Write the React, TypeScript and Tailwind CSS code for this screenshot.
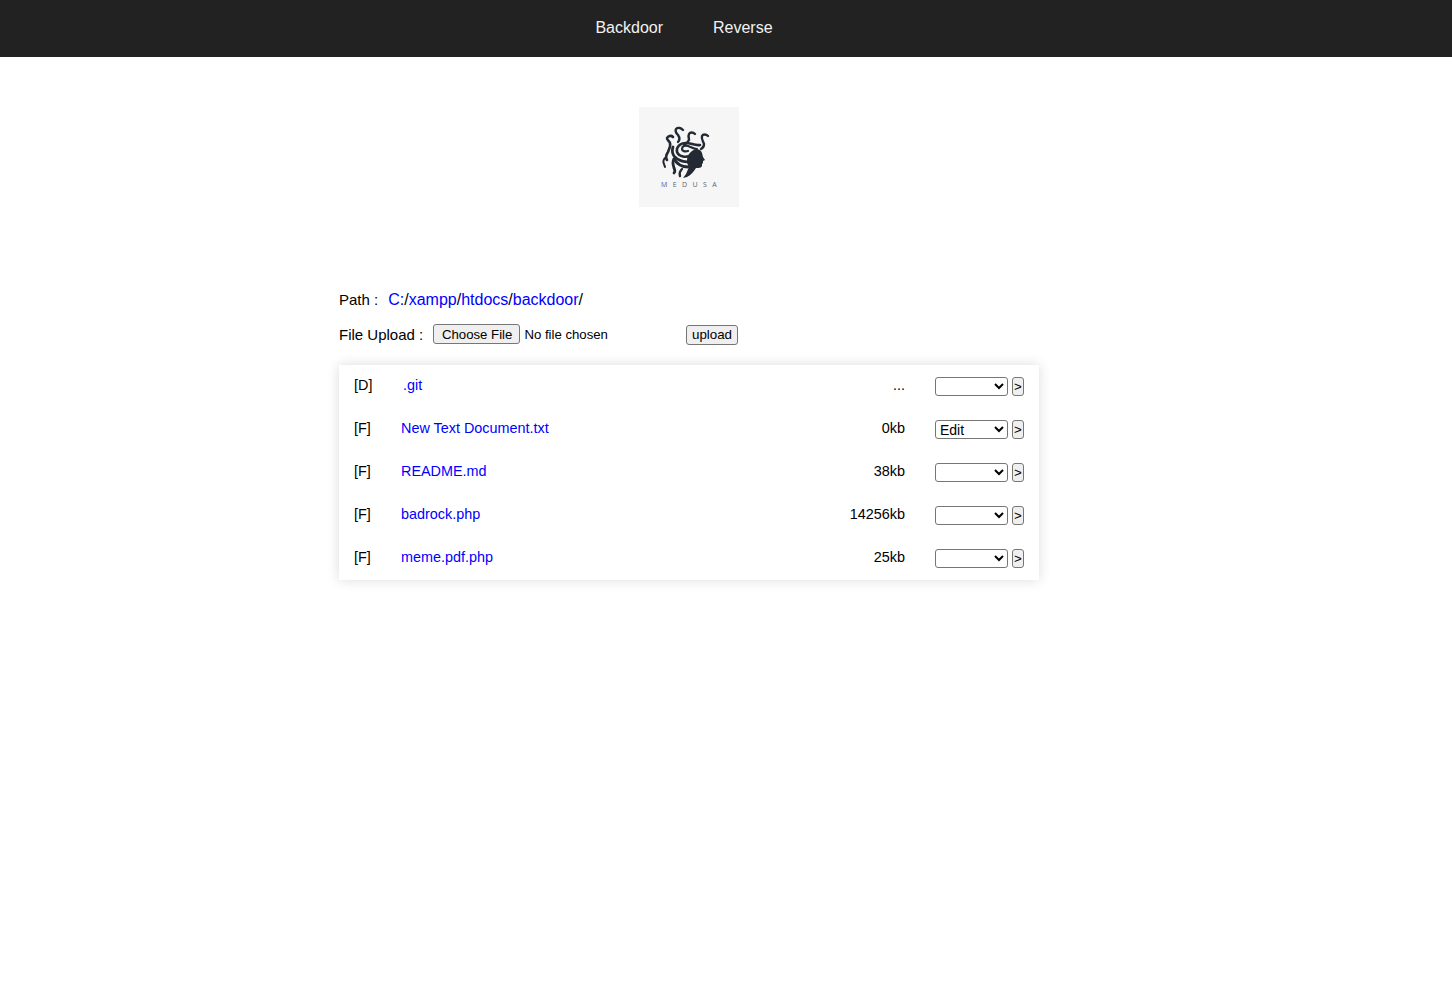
import React from "react";

const rows = [
  { t: "[D]", name: ".git", size: "...", sel: "", d: true },
  { t: "[F]", name: "New Text Document.txt", size: "0kb", sel: "Edit" },
  { t: "[F]", name: "README.md", size: "38kb", sel: "" },
  { t: "[F]", name: "badrock.php", size: "14256kb", sel: "" },
  { t: "[F]", name: "meme.pdf.php", size: "25kb", sel: "" },
];

function Logo() {
  return (
    <div className="w-[100px] h-[100px] bg-[#f6f6f6] flex flex-col items-center pt-[18px]">
      <svg width="54" height="56" viewBox="0 0 54 56" fill="none" stroke="#232a33" strokeLinecap="round" strokeLinejoin="round">
        <path d="M21 5c-2-2-5-3-7-1-1 2 0 4 2 6 2 3 2 5 0 7" strokeWidth="2.4" />
        <path d="M33 9c-2-2-5-2-6 0-1 2 0 4 0 6-1 2-3 4-5 5" strokeWidth="2.4" />
        <path d="M46 11c-2-2-5-2-6 0-1 3 1 5 2 8 0 2-1 4-3 5" strokeWidth="2.4" />
        <path d="M11 12c-2-2-5-1-6 1 0 2 2 3 3 5 1 3-1 6-2 9-2 3-3 5-1 8" strokeWidth="2.6" />
        <path d="M30 30c-6 3-13 2-15-3-1-5 3-9 9-9 5 0 9 3 14 2" strokeWidth="2.6" />
        <path d="M26 26c-3 1-6 0-6-2 0-3 3-4 6-3 3 1 6 3 9 3" strokeWidth="2.2" />
        <path d="M30 36c-6 2-14 0-18-5-2-3-2-6-1-9" strokeWidth="2.8" />
        <path d="M26 42c-6 0-11-3-14-8" strokeWidth="2.8" />
        <path d="M12 34c-2 3-1 6 0 9 1 2 1 4 0 5" strokeWidth="2.8" />
        <path d="M3 33c-2 2-2 4-1 6 0 1 1 2 1 3" strokeWidth="2" />
        <path d="M20 44c-2 2-3 4-2 7" strokeWidth="2.4" />
        <path
          d="M30 26c4-3 9-2 10 2l1 4 2 3-2 1 0 2-1 1 0 2c-1 2-3 2-6 2-2 3-5 7-9 9l-4 1 3-4 3-7c-3-4-3-12 3-16z"
          fill="#232a33"
          stroke="none"
        />
      </svg>
      <span className="text-[7px] leading-[8px] tracking-[5.4px] pl-[5px] text-[#5f646a] font-['Open_Sans',sans-serif]">MEDUSA</span>
    </div>
  );
}

export default function App() {
  return (
    <div className="min-h-[990px] bg-white text-black font-['Liberation_Sans',Arial,sans-serif]">
      <nav className="h-[57px] bg-[#222222] flex justify-center items-center gap-[50px] pr-[84px] pb-[2px] text-[16px] text-[#f2f2f2]">
        <a>Backdoor</a>
        <a>Reverse</a>
      </nav>
      <main className="w-[700px] mx-auto mr-[413px]">
        <div className="flex justify-center pt-[50px]">
          <Logo />
        </div>
        <div className="mt-[83px] h-[20px] flex items-center text-[16px]">
          <span className="text-[15px] pr-[10px]">Path :</span>
          <a className="text-[#0000ff]">C:</a>
          <span className="text-black">/</span>
          <a className="text-[#0000ff]">xampp</a>
          <span>/</span>
          <a className="text-[#0000ff]">htdocs</a>
          <span>/</span>
          <a className="text-[#0000ff]">backdoor</a>
          <span>/</span>
        </div>
        <div className="mt-[15px] h-[20px] flex items-center text-[15px]">
          <span className="w-[94px]">File Upload :</span>
          <input
            type="file"
            className="w-[253px] text-[13.2px] -mt-[1px] file:mr-[4px] file:h-[20px] file:pl-[8px] file:pr-[7px] file:border file:border-[#767676] file:rounded-[3px] file:bg-[#efefef] file:text-black"
          />
          <button className="h-[20px] w-[52px] -mt-[1px] text-[13.33px] leading-[16px] border border-[#767676] rounded-[3px] bg-[#efefef]">
            upload
          </button>
        </div>
        <div className="mt-[20px] bg-white shadow-[0_0_12px_rgba(0,0,0,0.14)] text-[14.4px]">
          {rows.map((r) => (
            <div key={r.name} className="h-[43px] flex items-center pl-[15px] pr-[15px]">
              <span className="w-[47px] -mt-[2px]">{r.t}</span>
              <a className={"flex-1 -mt-[2px] text-[#0000ff] " + (r.d ? "pl-[2px]" : "")}>{r.name}</a>
              <span className="w-[80px] -mt-[2px] text-right">{r.size}</span>
              <select
                defaultValue={r.sel}
                className="ml-[30px] h-[19px] w-[73px] border border-[#767676] rounded-[3px] bg-white text-[14px] appearance-auto"
              >
                <option value=""></option>
                <option value="Edit">Edit</option>
              </select>
              <button className="ml-[4px] h-[19px] w-[12px] text-[13.33px] leading-[15px] border border-[#767676] rounded-[3px] bg-[#efefef] text-center">
                &gt;
              </button>
            </div>
          ))}
        </div>
      </main>
    </div>
  );
}
